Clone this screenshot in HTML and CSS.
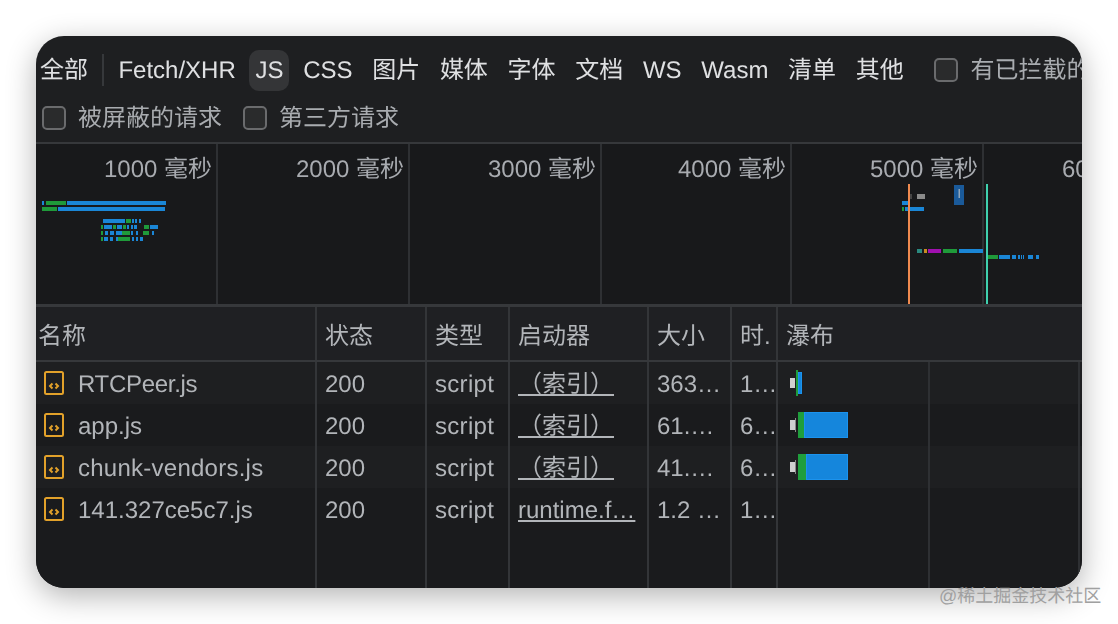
FILE: index.html
```html
<!DOCTYPE html>
<html lang="zh">
<head>
<meta charset="utf-8">
<title>Network</title>
<link rel="stylesheet" href="styles.css">
</head>
<body>
<svg class="defs" width="0" height="0"><symbol id="js" viewBox="0 0 20 24"><rect x="1" y="1" width="18" height="22" rx="1.5" fill="none" stroke="#e2a12a" stroke-width="2"/><path d="M8.5 12.5 L6 15 L8.5 17.5 M11.5 12.5 L14 15 L11.5 17.5" fill="none" stroke="#e2a12a" stroke-width="2"/></symbol></svg>
<main class="window">
  <div class="toolbar">
    <span class="chip">全部</span>
    <span class="sep"></span>
    <span class="chip">Fetch/XHR</span>
    <span class="chip active">JS</span>
    <span class="chip">CSS</span>
    <span class="chip">图片</span>
    <span class="chip">媒体</span>
    <span class="chip">字体</span>
    <span class="chip">文档</span>
    <span class="chip">WS</span>
    <span class="chip">Wasm</span>
    <span class="chip">清单</span>
    <span class="chip">其他</span>
    <label class="check first"><span class="box"></span>有已拦截的 Cookie</label>
  </div>
  <div class="toolbar2">
    <label class="check"><span class="box"></span>被屏蔽的请求</label>
    <label class="check"><span class="box"></span>第三方请求</label>
  </div>
  <section class="overview">
    <div class="tick one">1000 毫秒</div>
    <div class="tick">2000 毫秒</div>
    <div class="tick">3000 毫秒</div>
    <div class="tick four">4000 毫秒</div>
    <div class="tick">5000 毫秒</div>
    <div class="tick">6000 毫秒</div>
    <svg class="chart" viewBox="36 144 1046 160" width="1046" height="160">
      <g fill="#1a86d6">
        <rect x="42" y="201" width="2" height="4"/><rect x="67" y="201" width="99" height="4"/>
        <rect x="58" y="207" width="107" height="4"/>
        <rect x="103" y="219" width="22" height="4"/><rect x="132" y="219" width="2" height="4"/><rect x="135" y="219" width="2" height="4"/><rect x="139" y="219" width="2" height="4"/>
        <rect x="104" y="225" width="8" height="4"/><rect x="117" y="225" width="5" height="4"/><rect x="127" y="225" width="2" height="4"/><rect x="131" y="225" width="2" height="4"/><rect x="134" y="225" width="3" height="4"/><rect x="150" y="225" width="8" height="4"/>
        <rect x="105" y="231" width="3" height="4"/><rect x="110" y="231" width="4" height="4"/><rect x="116" y="231" width="6" height="4"/><rect x="131" y="231" width="2" height="4"/><rect x="136" y="231" width="2" height="4"/><rect x="152" y="231" width="2" height="4"/>
        <rect x="104" y="237" width="4" height="4"/><rect x="110" y="237" width="3" height="4"/><rect x="116" y="237" width="3" height="4"/><rect x="132" y="237" width="2" height="4"/><rect x="136" y="237" width="2" height="4"/><rect x="140" y="237" width="3" height="4"/>
        <rect x="902" y="201" width="6" height="4"/><rect x="905" y="207" width="19" height="4"/>
        <rect x="959" y="249" width="24" height="4"/>
        <rect x="999" y="255" width="11" height="4"/><rect x="1012" y="255" width="4" height="4"/><rect x="1018" y="255" width="2" height="4"/><rect x="1021" y="255" width="1" height="4"/><rect x="1023" y="255" width="1" height="4"/><rect x="1028" y="255" width="5" height="4"/><rect x="1036" y="255" width="3" height="4"/>
      </g>
      <g fill="#1f9a3a">
        <rect x="46" y="201" width="20" height="4"/><rect x="42" y="207" width="15" height="4"/>
        <rect x="126" y="219" width="5" height="4"/>
        <rect x="101" y="225" width="2" height="4"/><rect x="113" y="225" width="3" height="4"/><rect x="123" y="225" width="3" height="4"/><rect x="144" y="225" width="5" height="4"/>
        <rect x="101" y="231" width="2" height="4"/><rect x="122" y="231" width="8" height="4"/><rect x="143" y="231" width="6" height="4"/>
        <rect x="101" y="237" width="2" height="4"/><rect x="118" y="237" width="12" height="4"/>
        <rect x="902" y="207" width="2" height="4"/><rect x="943" y="249" width="14" height="4"/><rect x="988" y="255" width="10" height="4"/>
      </g>
      <rect x="917" y="194" width="8" height="5" fill="#8a8a8a"/>
      <rect x="909" y="194" width="3" height="5" fill="#444"/>
      <rect x="954" y="185" width="10" height="20" fill="#1a5a9a"/>
      <rect x="958.5" y="189" width="1.5" height="9" fill="#8fa5ba"/>
      <rect x="917" y="249" width="5" height="4" fill="#2a8a80"/>
      <rect x="924" y="249" width="3" height="4" fill="#c98a20"/>
      <rect x="928" y="249" width="13" height="4" fill="#a010b0"/>
      <rect x="908" y="184" width="2" height="120" fill="#f08a4f"/>
      <rect x="986" y="184" width="2" height="120" fill="#3fd0ae"/>
    </svg>
  </section>
  <section class="table">
    <div class="row head">
      <div class="cell first">名称</div><div class="cell">状态</div><div class="cell">类型</div><div class="cell">启动器</div><div class="cell">大小</div><div class="cell">时.</div><div class="cell last">瀑布</div>
    </div>
    <div class="row odd">
      <div class="cell name tight"><svg class="ficon" width="20" height="24"><use href="#js"/></svg>RTCPeer.js</div><div class="cell">200</div><div class="cell type">script</div><div class="cell link">（索引）</div><div class="cell">363…</div><div class="cell">1…</div>
      <div class="cell wf"><span class="pre"></span><span class="conn short"></span><span class="wait thin"></span><span class="load tiny"></span></div>
    </div>
    <div class="row">
      <div class="cell name"><svg class="ficon" width="20" height="24"><use href="#js"/></svg>app.js</div><div class="cell">200</div><div class="cell type">script</div><div class="cell link">（索引）</div><div class="cell">61.…</div><div class="cell">6…</div>
      <div class="cell wf"><span class="pre"></span><span class="conn"></span><span class="wait a"></span><span class="load a"></span></div>
    </div>
    <div class="row odd">
      <div class="cell name wide"><svg class="ficon" width="20" height="24"><use href="#js"/></svg>chunk-vendors.js</div><div class="cell">200</div><div class="cell type">script</div><div class="cell link">（索引）</div><div class="cell">41.…</div><div class="cell">6…</div>
      <div class="cell wf"><span class="pre"></span><span class="conn"></span><span class="wait b"></span><span class="load b"></span></div>
    </div>
    <div class="row">
      <div class="cell name"><svg class="ficon" width="20" height="24"><use href="#js"/></svg>141.327ce5c7.js</div><div class="cell">200</div><div class="cell type">script</div><div class="cell link">runtime.f…</div><div class="cell">1.2 …</div><div class="cell">1…</div>
      <div class="cell wf"></div>
    </div>
    <div class="row filler">
      <div class="cell"></div><div class="cell"></div><div class="cell"></div><div class="cell"></div><div class="cell"></div><div class="cell"></div><div class="cell wf"></div>
    </div>
  </section>
</main>
<div class="mark">@稀土掘金技术社区</div>
</body>
</html>
```
FILE: styles.css
```css
* { box-sizing: border-box; }
html, body { margin: 0; height: 624px; overflow: hidden; background: #fff; }
body {
  position: relative;
  font: 24px/32px "Liberation Sans", "Noto Sans CJK SC", sans-serif;
  text-rendering: geometricPrecision;
  padding: 36px;
}
.defs { position: absolute; }
.window {
  width: 1046px;
  height: 552px;
  border-radius: 28px;
  overflow: hidden;
  background: #1e1f21;
  box-shadow: 0 8px 30px rgba(0, 0, 0, .3);
  display: flex;
  flex-direction: column;
  filter: blur(.3px);
}
.toolbar {
  height: 57px;
  margin-left: -2px;
  padding-top: 14px;
  display: flex;
  align-items: flex-start;
  gap: 7.7px;
  white-space: nowrap;
  color: #dfe0e2;
  flex: none;
}
.chip { padding: 5px 6px 4px; border-radius: 10px; flex: none; }
.chip.active { background: #343537; }
.sep { width: 2px; height: 32px; margin: 4px 1px 0 0; background: #36383b; flex: none; }
.check { display: flex; align-items: flex-start; gap: 12px; color: #a9acb0; flex: none; white-space: nowrap; }
.check.first { margin: 5px 0 0 17px; }
.box { width: 24px; height: 24px; margin-top: 3px; border: 2px solid #6a6b6d; border-radius: 5px; background: #2a2b2c; flex: none; }
.toolbar2 { height: 49px; padding: 10px 0 0 6px; display: flex; gap: 21px; flex: none; align-items: flex-start; }
.overview {
  position: relative;
  height: 165px;
  display: flex;
  flex: none;
  overflow: hidden;
  border-top: 2px solid #36383b;
  border-bottom: 3px solid #36383b;
  background: #18191b;
  color: #a8abb0;
}
.tick { width: 192px; flex: none; text-align: right; padding: 10px 4px 0 0; border-right: 2px solid #2e3033; white-space: nowrap; }
.tick.one { width: 182px; }
.tick.four { width: 190px; }
.chart { position: absolute; left: 0; top: 0; }
.table { flex: 1; display: flex; flex-direction: column; color: #b2b5b9; min-height: 0; }
.row { display: grid; grid-template-columns: 281px 110px 83px 139px 83px 46px 304px; height: 42px; flex: none; background: #1a1b1d; }
.row.odd { background: #1e1f21; }
.row.head { height: 55px; background: #1f2023; border-bottom: 2px solid #36383b; }
.row.head .cell { padding-top: 6px; }
.row.filler { flex: 1; height: auto; }
.cell { padding: 3px 0 0 8px; border-right: 2px solid #333538; display: flex; align-items: center; white-space: nowrap; overflow: hidden; }
.row.head .cell.first { padding-left: 2px; }
.cell.last, .cell.wf { border-right: 0; }
.cell.name { gap: 14px; }
.cell.tight { letter-spacing: -.3px; }
.cell.wide { letter-spacing: .25px; }
.cell.type { letter-spacing: .3px; }
.ficon { flex: none; margin-top: -4px; }
.link { text-decoration: underline; }
.cell.wf {
  padding: 0 0 0 12px;
  background-image: linear-gradient(#2e3033, #2e3033), linear-gradient(#2e3033, #2e3033);
  background-size: 2px 100%;
  background-position: 150px 0, 300px 0;
  background-repeat: no-repeat;
}
.pre { width: 5px; height: 10px; background: #d0d0d0; flex: none; }
.conn { width: 1px; height: 14px; background: #8a8a8a; margin-right: 2px; flex: none; }
.conn.short { width: 0; margin-right: 1px; }
.wait { height: 26px; background: #1f9e3c; flex: none; }
.wait.thin { width: 2px; }
.wait.a { width: 6px; }
.wait.b { width: 8px; }
.load { height: 26px; background: #1586dc; border: 1px solid #1b93ee; flex: none; }
.load.tiny { width: 4px; height: 22px; }
.load.a { width: 44px; }
.load.b { width: 42px; }
.mark {
  position: absolute;
  left: 939px;
  top: 584px;
  font-size: 18px;
  line-height: 24px;
  color: #a0a0a0;
  white-space: nowrap;
}
```
